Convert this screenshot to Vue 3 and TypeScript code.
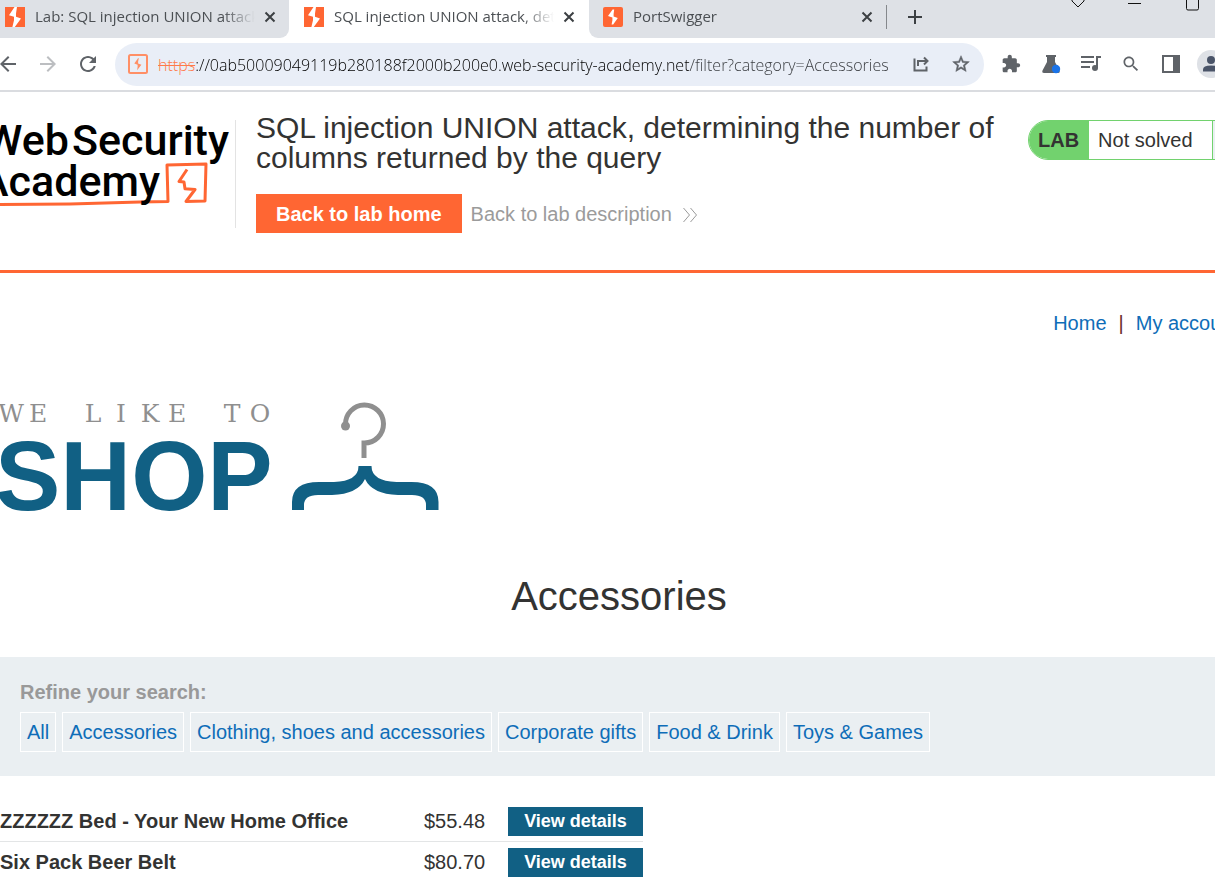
<script setup lang="ts">
import { ref } from 'vue'

interface Product {
  name: string
  price: string
}

const address = ref('://0ab50009049119b280188f2000b200e0.web-security-academy.net/filter?category=Accessories')
const categories: string[] = [
  'All',
  'Accessories',
  'Clothing, shoes and accessories',
  'Corporate gifts',
  'Food & Drink',
  'Toys & Games',
]
const products: Product[] = [
  { name: 'ZZZZZZ Bed - Your New Home Office', price: '$55.48' },
  { name: 'Six Pack Beer Belt', price: '$80.70' },
]
</script>

<template>
  <div class="window">
    <header class="chrome">
      <div class="strip">
        <div class="tab tab-left">
          <svg class="favicon" viewBox="0 0 20 20" aria-hidden="true">
            <rect width="20" height="20" fill="#ff6633" />
            <path d="M9.5 0 4 8.2l5 1.6v3.4l-1.6 6.8h2.4L16 11.6l-5-1.8V6.4L12 0z" fill="#fff" />
          </svg>
          <span class="tab-title">Lab: SQL injection UNION attack, determining</span>
          <button class="close" type="button" aria-label="Close tab">
            <svg viewBox="0 0 12 12"><path d="M1.5 1.5l9 9M10.5 1.5l-9 9" /></svg>
          </button>
        </div>
        <div class="tab tab-active">
          <svg class="favicon" viewBox="0 0 20 20" aria-hidden="true">
            <rect width="20" height="20" fill="#ff6633" />
            <path d="M9.5 0 4 8.2l5 1.6v3.4l-1.6 6.8h2.4L16 11.6l-5-1.8V6.4L12 0z" fill="#fff" />
          </svg>
          <span class="tab-title">SQL injection UNION attack, determining</span>
          <button class="close" type="button" aria-label="Close tab">
            <svg viewBox="0 0 12 12"><path d="M1.5 1.5l9 9M10.5 1.5l-9 9" /></svg>
          </button>
        </div>
        <div class="strip-rest">
          <div class="tab tab-right">
            <svg class="favicon" viewBox="0 0 20 20" aria-hidden="true">
              <rect width="20" height="20" rx="2" fill="#ff6633" />
              <path d="M9.6 2.5 5 9l4.4 1.4v2.8L8.6 17.5h1.6l4.6-6.6-4.2-1.3V7l.6-4.5z" fill="#fff" />
            </svg>
            <span class="tab-title">PortSwigger</span>
            <button class="close" type="button" aria-label="Close tab">
              <svg viewBox="0 0 12 12"><path d="M1.5 1.5l9 9M10.5 1.5l-9 9" /></svg>
            </button>
          </div>
          <button class="new-tab" type="button" aria-label="New tab">
            <svg viewBox="0 0 16 16"><path d="M8 1v14M1 8h14" /></svg>
          </button>
          <div class="controls">
            <button type="button" aria-label="Search tabs">
              <svg viewBox="0 0 20 12"><path d="M4 0v1l6 6 6-6V0" /></svg>
            </button>
            <button type="button" aria-label="Minimise">
              <svg viewBox="0 0 20 12"><path d="M3 3.5h13" /></svg>
            </button>
            <button type="button" aria-label="Maximise">
              <svg viewBox="0 0 20 12"><path d="M4.500 0v8.500q0 1.500 1.500 1.500h9q1.500 0 1.500-1.500V0" /></svg>
            </button>
          </div>
        </div>
      </div>

      <div class="toolbar">
        <button class="tool" type="button" aria-label="Back">
          <svg class="s24" viewBox="0 0 24 24"><path d="M20 11H7.830l5.590-5.590L12 4l-8 8 8 8 1.410-1.410L7.830 13H20z" /></svg>
        </button>
        <button class="tool faded" type="button" aria-label="Forward">
          <svg class="s24" viewBox="0 0 24 24"><path d="M4 11h12.170l-5.590-5.590L12 4l8 8-8 8-1.410-1.410L16.170 13H4z" /></svg>
        </button>
        <button class="tool" type="button" aria-label="Reload">
          <svg class="s24" viewBox="0 0 24 24"><path d="M17.650 6.350C16.200 4.900 14.210 4 12 4c-4.420 0-7.990 3.580-7.990 8s3.570 8 7.990 8c3.730 0 6.840-2.550 7.730-6h-2.080c-.820 2.330-3.040 4-5.650 4-3.310 0-6-2.690-6-6s2.690-6 6-6c1.660 0 3.140.690 4.220 1.780L13 11h7V4z" /></svg>
        </button>
        <div class="omnibox">
          <svg class="site" viewBox="0 0 20 20" aria-hidden="true">
            <rect x="1" y="1" width="18" height="18" rx="1.500" fill="none" stroke="#ff8f66" stroke-width="2" />
            <path d="M10 4.300 6.300 9.600l3.300 1.200v2.200l-.5 3.200 4.300-5.400-3.300-1.300V7.600l.8-3.300z" fill="#ff8f66" />
          </svg>
          <label class="scheme" for="address">https</label>
          <input id="address" v-model="address" class="address" type="text" spellcheck="false" />
          <button class="tool" type="button" aria-label="Share">
            <svg class="s20" viewBox="0 0 20 20"><path d="M3.500 4.500v12h12v-4M7 12V7h9M13 3.500 16.500 7 13 10.500" class="line" /></svg>
          </button>
          <button class="tool" type="button" aria-label="Bookmark">
            <svg class="s20" viewBox="0 0 24 24"><path d="M22 9.240l-7.190-.620L12 2 9.190 8.630 2 9.240l5.460 4.730L5.820 21 12 17.270 18.180 21l-1.630-7.030zM12 15.400l-3.760 2.270 1-4.280-3.320-2.880 4.380-.380L12 6.100l1.710 4.040 4.380.380-3.320 2.880 1 4.280z" stroke="#5f6368" stroke-width=".6" /></svg>
          </button>
        </div>
        <button class="tool" type="button" aria-label="Extensions">
          <svg class="s20" viewBox="0 0 24 24"><path d="M20.500 11H19V7c0-1.100-.9-2-2-2h-4V3.500C13 2.120 11.880 1 10.500 1S8 2.120 8 3.500V5H4c-1.100 0-1.990.9-1.990 2v3.800H3.500c1.490 0 2.700 1.210 2.700 2.700s-1.210 2.700-2.700 2.700H2V20c0 1.100.9 2 2 2h3.800v-1.500c0-1.490 1.210-2.700 2.700-2.700s2.700 1.210 2.700 2.700V22H17c1.100 0 2-.9 2-2v-4h1.500c1.380 0 2.500-1.120 2.500-2.500S21.880 11 20.500 11z" /></svg>
        </button>
        <button class="tool" type="button" aria-label="Labs">
          <svg class="s20" viewBox="0 0 20 20">
            <path d="M5 1h10v2h-1v5l4.500 8.500q.8 2.500-1.500 2.500H3q-2.300 0-1.500-2.500L6 8V3H5z" />
            <circle cx="15" cy="15" r="4.200" fill="#1a73e8" />
          </svg>
        </button>
        <button class="tool" type="button" aria-label="Media controls">
          <svg class="s20" viewBox="0 0 20 20">
            <path d="M0 2h13v2H0zM0 7h13v2H0zM0 12h9v2H0zM15 2h5v2h-3v10h-2z" />
            <circle cx="14" cy="14" r="3" />
          </svg>
        </button>
        <button class="tool" type="button" aria-label="Search">
          <svg class="s20" viewBox="0 0 24 24"><path d="M15.500 14h-.790l-.280-.270C15.410 12.590 16 11.110 16 9.500 16 5.910 13.090 3 9.500 3S3 5.910 3 9.500 5.910 16 9.500 16c1.610 0 3.090-.590 4.230-1.570l.270.280v.790l5 4.990L20.490 19zm-6 0C7.010 14 5 11.990 5 9.500S7.010 5 9.500 5 14 7.010 14 9.500 11.990 14 9.500 14z" /></svg>
        </button>
        <button class="tool" type="button" aria-label="Side panel">
          <svg class="s20" viewBox="0 0 20 20"><path d="M1 1h18v18H1zM3 3v14h9V3z" fill-rule="evenodd" /></svg>
        </button>
        <button class="tool" type="button" aria-label="Profile">
          <svg class="s28" viewBox="0 0 28 28">
            <circle cx="14" cy="14" r="14" fill="#dee1e6" />
            <circle cx="14" cy="10" r="4" fill="#4a5468" />
            <path d="M6 21.500v-2q0-4 8-4t8 4v2z" fill="#4a5468" />
          </svg>
        </button>
      </div>
    </header>

    <div class="page">
      <section class="lab">
        <a class="brand" href="#" aria-label="Web Security Academy">
          <svg viewBox="0 0 235 108">
            <path
              d="M0 84.500 70 84l70-2 28-.5-1-36.500L206 44l-1 37-19 .5L195 69.500l-10-.8-1-6.700-5-.5 8-12"
              fill="none"
              stroke="#ff6633"
              stroke-width="3"
              stroke-linejoin="round"
            />
            <g class="brand-text" text-anchor="end">
              <text x="69" y="35">Web</text>
              <text x="229" y="35">Security</text>
              <text x="160" y="76">Academy</text>
            </g>
          </svg>
        </a>
        <div class="lab-main">
          <h2>SQL injection UNION attack, determining the number of columns returned by the query</h2>
          <div class="lab-links">
            <a class="lab-home" href="#">Back to lab home</a>
            <a class="lab-description" href="#">
              Back to lab description
              <svg viewBox="0 0 16 16" aria-hidden="true"><path d="M1.500 1l6 7-6 7M8.500 1l6 7-6 7" /></svg>
            </a>
          </div>
        </div>
        <div class="status">
          <strong>LAB</strong>
          <span class="status-text">Not solved</span>
          <span class="status-end"></span>
        </div>
      </section>

      <nav class="site-nav">
        <a href="#">Home</a>
        <span>|</span>
        <a href="#">My account</a>
      </nav>

      <svg class="shop-logo" viewBox="0 0 440 112" role="img" aria-label="We like to shop">
        <text class="shop-small" y="20" text-anchor="middle" x="11 38 66 93 121 150 177 205 232 260">WE LIKE TO</text>
        <text class="shop-big" x="-5" y="108">SHOP</text>
        <path
          d="M345.500 22.500a19 19 0 1 1 19 18.500h-.5v15"
          fill="none"
          stroke="#8f8f8f"
          stroke-width="5"
        />
        <circle cx="345.500" cy="24" r="4.500" fill="#8f8f8f" />
        <path
          d="M358.500 64h13q0 15 25 16h15q27 0 27 20v8h-12.500v-5q0-10-14-10h-14q-26-1-33-16-7 15-33 16h-14q-14 0-14 10v5H292v-8q0-20 27-20h15q24.500-1 24.500-16z"
          fill="#116084"
        />
      </svg>

      <h1>Accessories</h1>

      <section class="filters">
        <h3>Refine your search:</h3>
        <div class="filter-list">
          <a v-for="category in categories" :key="category" href="#">{{ category }}</a>
        </div>
      </section>

      <table class="products">
        <tbody>
          <tr v-for="product in products" :key="product.name">
            <th scope="row">{{ product.name }}</th>
            <td class="price">{{ product.price }}</td>
            <td class="action"><a href="#">View details</a></td>
          </tr>
        </tbody>
      </table>
    </div>
  </div>
</template>

<style>
html,
body {
  margin: 0;
  background: #fff;
}
</style>

<style scoped>
.window {
  overflow: hidden;
  font-family: "Liberation Sans", Arial, sans-serif;
  font-size: 20px;
  color: #333332;
}
button {
  border: 0;
  padding: 0;
  background: none;
  font: inherit;
  display: flex;
  align-items: center;
  justify-content: center;
}
a {
  color: #0e6db8;
  text-decoration: none;
}
svg {
  display: block;
  flex: none;
}

.chrome {
  font-family: "Open Sans", "Noto Sans", sans-serif;
  border-bottom: 2px solid #dadce0;
}
.strip {
  display: flex;
  height: 38px;
}
.tab {
  display: flex;
  align-items: center;
  box-sizing: border-box;
  height: 38px;
  padding-bottom: 4px;
  font-size: 15px;
  color: #4b4f53;
}
.tab-left {
  width: 289px;
  padding-left: 5px;
  padding-right: 13px;
  background: #dee1e6;
  border-bottom-right-radius: 9px;
}
.tab-active {
  width: 300px;
  padding-left: 15px;
  padding-right: 14px;
}
.strip-rest {
  flex: 1;
  display: flex;
  background: #dee1e6;
  border-bottom-left-radius: 9px;
}
.tab-right {
  width: 297px;
  padding-left: 14px;
  padding-right: 13px;
}
.favicon {
  width: 20px;
  height: 20px;
}
.tab-title {
  flex: 1;
  min-width: 0;
  margin: 0 9px 0 10px;
  padding-bottom: 2px;
  overflow: hidden;
  white-space: nowrap;
  mask-image: linear-gradient(to right, #000 calc(100% - 32px), transparent);
}
.close svg {
  width: 12px;
  height: 12px;
}
.close path {
  stroke: #3c4043;
  stroke-width: 2;
}
.new-tab {
  height: 24px;
  margin-top: 5px;
  padding-left: 20px;
  border-left: 1px solid #85888c;
}
.new-tab svg {
  width: 16px;
  height: 16px;
}
.new-tab path {
  stroke: #3c4043;
  stroke-width: 2;
}
.controls {
  display: flex;
  gap: 37px;
  height: 12px;
  margin-left: auto;
  padding-right: 13px;
}
.controls svg {
  width: 20px;
  height: 12px;
}
.controls path {
  fill: none;
  stroke: #111;
}
.toolbar {
  display: flex;
  align-items: center;
  height: 52px;
  margin: 0 -16px 0 -12px;
}
.tool {
  flex: none;
  width: 40px;
  height: 40px;
}
.tool svg {
  fill: #5f6368;
}
.faded svg {
  fill: #bcbec1;
}
.s20 {
  width: 20px;
  height: 20px;
}
.s24 {
  width: 24px;
  height: 24px;
}
.s28 {
  width: 28px;
  height: 28px;
}
.line {
  fill: none;
  stroke: #5f6368;
  stroke-width: 2;
}
.omnibox {
  flex: 1;
  min-width: 0;
  display: flex;
  align-items: center;
  height: 43px;
  margin: 0 7px;
  padding: 0 3px 0 13px;
  box-sizing: border-box;
  border-radius: 22px;
  background: #e9eef7;
  font-size: 16px;
  font-weight: 300;
}
.site {
  width: 20px;
  height: 20px;
  margin-right: 10px;
}
.scheme {
  padding-top: 2px;
  color: #ff7a4a;
  text-decoration: line-through;
}
.address {
  flex: 1;
  min-width: 0;
  padding: 2px 0 0;
  border: 0;
  outline: 0;
  font: inherit;
  color: transparent;
  caret-color: #000;
  background: linear-gradient(to right, #000 494px, #36393d 494px);
  background-clip: text;
}

.page {
  width: calc(100% + 23px);
}
.lab {
  display: flex;
  align-items: flex-start;
  box-sizing: border-box;
  min-height: 181px;
  padding-top: 28px;
  border-bottom: 3px solid #ff6633;
}
.brand {
  border-right: 1px solid #e3e3e3;
}
.brand svg {
  width: 235px;
  height: 108px;
}
.brand-text {
  font-family: Roboto, sans-serif;
  font-size: 43px;
  font-weight: 500;
  fill: #000;
}
.lab-main {
  flex: 1;
  padding: 0 20px;
}
.lab h2 {
  margin: -7px 0 21px;
  font-size: 30px;
  line-height: 30px;
  font-weight: 400;
}
.lab-links {
  display: flex;
  gap: 9px;
  line-height: 37px;
}
.lab-home {
  padding: 2px 20px 0;
  font-weight: 700;
  color: #fff;
  background: #ff6633;
}
.lab-description {
  display: flex;
  align-items: center;
  gap: 10px;
  padding-top: 2px;
  color: #9b9b9b;
}
.lab-description svg {
  width: 16px;
  height: 16px;
}
.lab-description path {
  fill: none;
  stroke: #9b9b9b;
}
.status {
  display: flex;
  box-sizing: border-box;
  width: 210px;
  line-height: 38px;
  border: 1px solid #72d26e;
  border-radius: 20px 0 0 20px;
  overflow: hidden;
}
.status strong {
  padding: 0 10px 0 9px;
  background: #72d26e;
}
.status-text {
  flex: 1;
  padding-left: 9px;
}
.status-end {
  width: 24px;
  border-left: 1px solid #72d26e;
  background: #eaeff2;
}
.site-nav {
  display: flex;
  justify-content: flex-end;
  gap: 12px;
  padding-top: 38px;
  line-height: 24px;
}
.site-nav span {
  color: #6b2c2c;
}
.shop-logo {
  width: 440px;
  height: 112px;
  margin-top: 67px;
}
.shop-small {
  font-family: "DejaVu Serif", serif;
  font-size: 25px;
  fill: #8f8f8f;
}
.shop-big {
  font-size: 98px;
  font-weight: 700;
  fill: #116084;
}
h1 {
  margin: 59px 0 38px;
  font-size: 40px;
  line-height: 46px;
  font-weight: 400;
  text-align: center;
}
.filters {
  padding: 23px 20px 24px;
  background: #eaeff2;
}
.filters h3 {
  margin: 0 0 8px;
  font-size: 20px;
  line-height: 24px;
  color: #999;
}
.filter-list {
  display: flex;
  gap: 6px;
}
.filter-list a {
  padding: 0 6px;
  border: 1px solid #fff;
  line-height: 38px;
}
.products {
  margin-top: 25px;
  border-collapse: collapse;
}
.products th,
.products td {
  height: 29px;
  padding: 6px 0 5px;
  line-height: 29px;
  border-bottom: 1px solid #e3e5e6;
  text-align: left;
  vertical-align: middle;
}
.products th {
  width: 424px;
}
.products .price {
  width: 84px;
}
.products .action {
  width: 135px;
}
.action a {
  display: block;
  font-size: 18px;
  font-weight: 700;
  text-align: center;
  color: #fff;
  background: #116084;
}
.products tr:last-child > * {
  padding-bottom: 0;
  border-bottom: 0;
}
</style>
